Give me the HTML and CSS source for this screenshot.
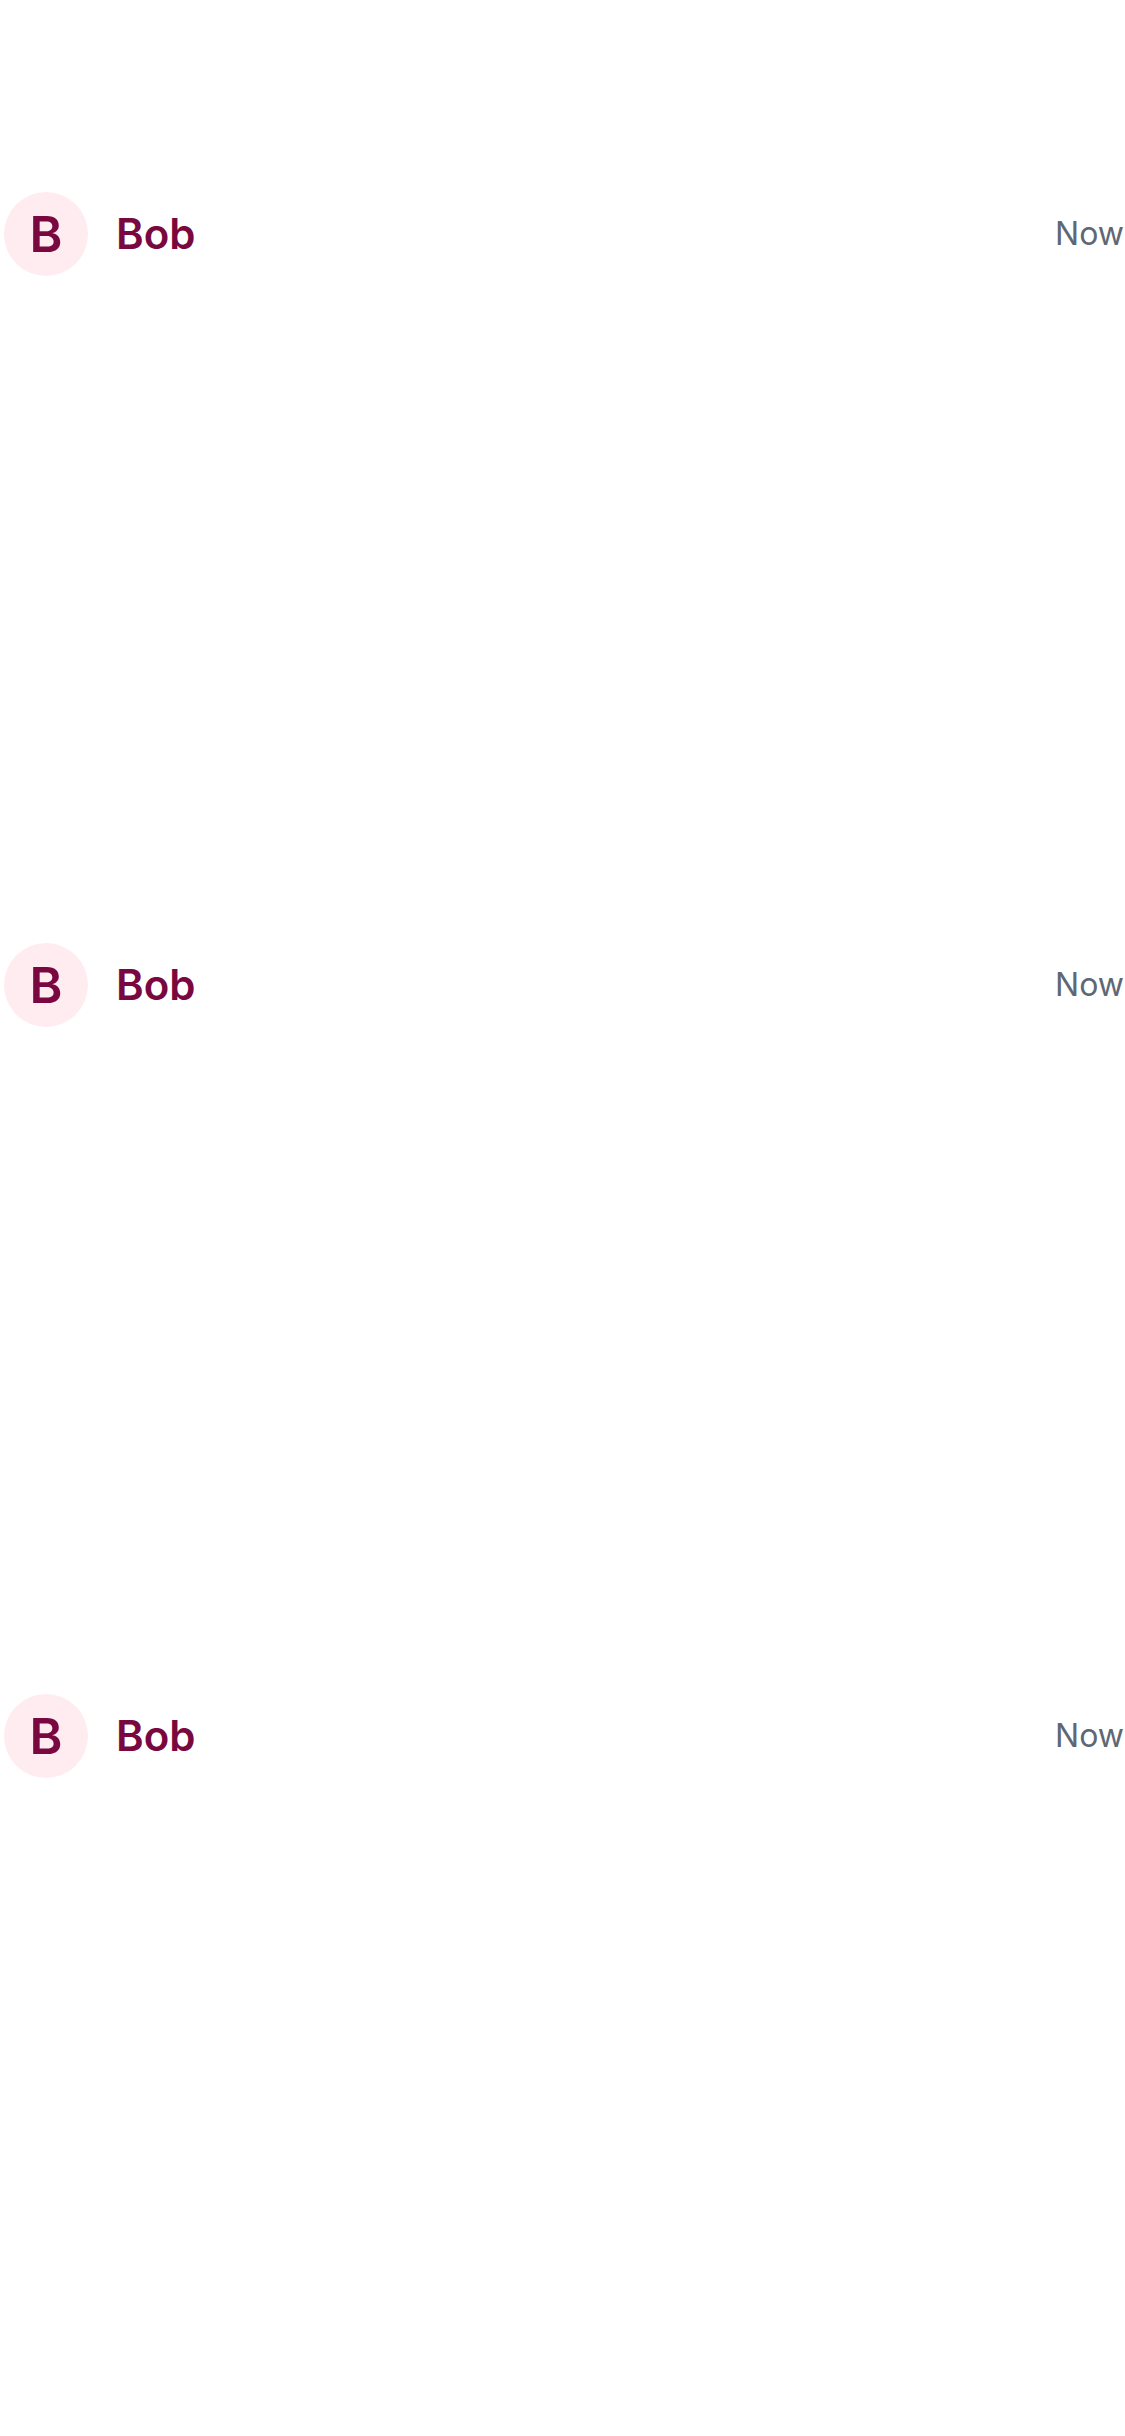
FILE: index.html
```html
<!DOCTYPE html>
<html>
<head>
<meta charset="utf-8">
<link rel="stylesheet" href="styles.css">
</head>
<body>
<main class="feed">
  <article class="post">
    <header class="post-head">
      <div class="author">
        <div class="avatar">B</div>
        <span class="name">Bob</span>
      </div>
      <span class="time">Now</span>
    </header>
  </article>
  <article class="post">
    <header class="post-head">
      <div class="author">
        <div class="avatar">B</div>
        <span class="name">Bob</span>
      </div>
      <span class="time">Now</span>
    </header>
  </article>
  <article class="post">
    <header class="post-head">
      <div class="author">
        <div class="avatar">B</div>
        <span class="name">Bob</span>
      </div>
      <span class="time">Now</span>
    </header>
  </article>
</main>
</body>
</html>
```
FILE: styles.css
```css
html, body {
  margin: 0;
  padding: 0;
  background: #ffffff;
}
body {
  font-family: Inter, "Noto Sans", sans-serif;
  width: 1125px;
  height: 2436px;
  overflow: hidden;
}
.feed {
  display: flex;
  flex-direction: column;
  padding-top: 192px;
}
.post {
  height: 751px;
  box-sizing: border-box;
}
.post-head {
  display: flex;
  align-items: center;
  justify-content: space-between;
  padding-left: 4px;
  padding-right: 1px;
  height: 84px;
}
.author {
  display: flex;
  align-items: center;
  gap: 28px;
}
.avatar {
  width: 84px;
  height: 84px;
  border-radius: 50%;
  background: #ffecf0;
  color: #7a0840;
  font-size: 50px;
  font-weight: 600;
  display: flex;
  align-items: center;
  justify-content: center;
  line-height: 1;
}
.name {
  color: #7a0840;
  font-size: 42px;
  font-weight: 600;
  line-height: 1;
}
.time {
  color: #5f6774;
  font-size: 32px;
  font-weight: 400;
  line-height: 1;
}
```
